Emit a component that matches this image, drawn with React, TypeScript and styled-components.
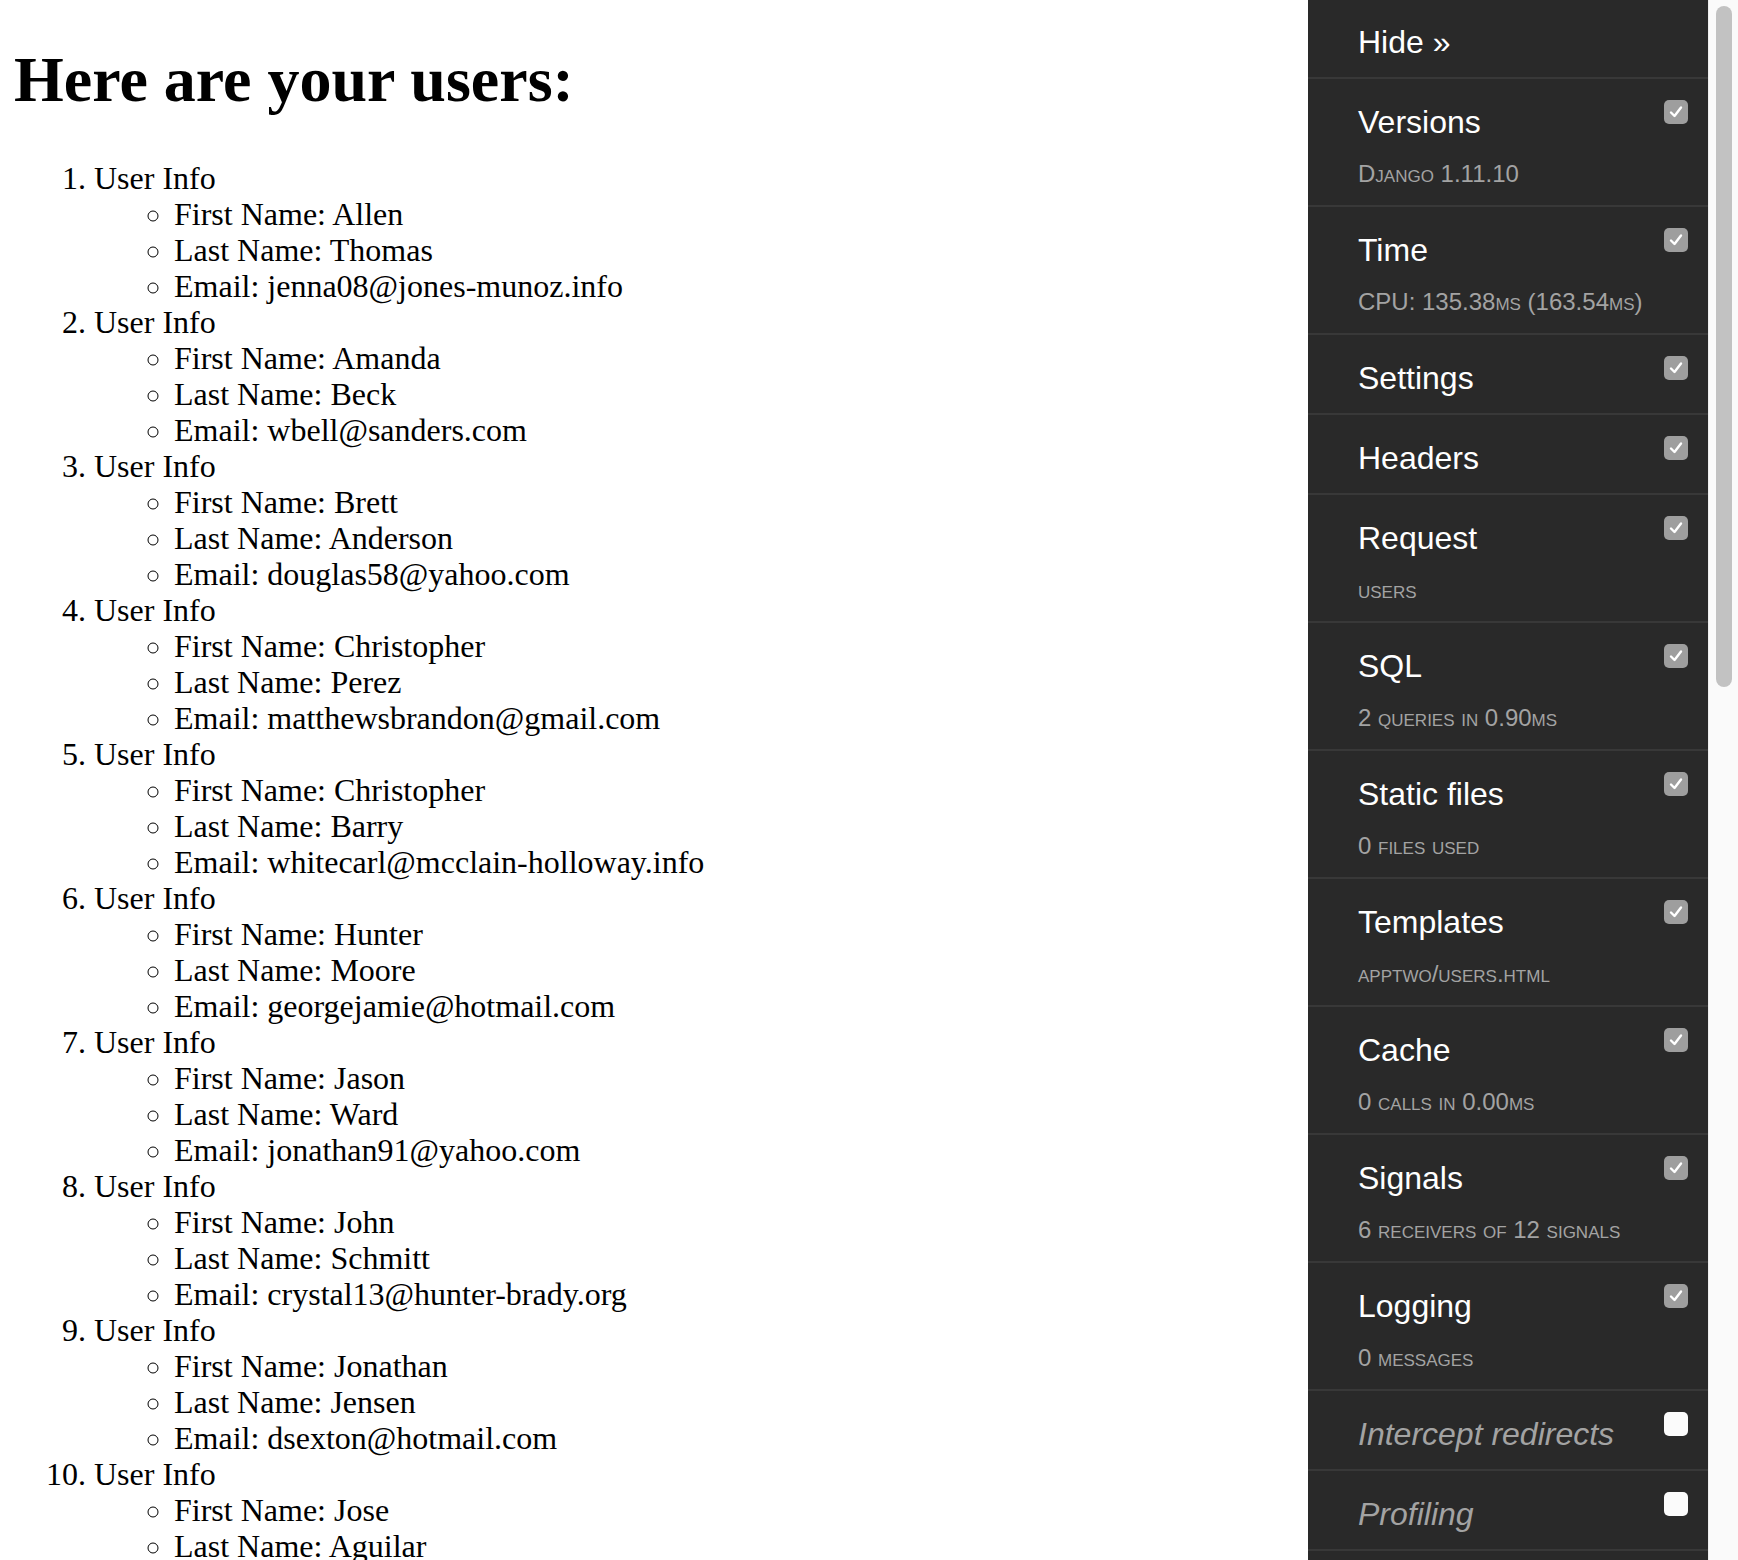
import React from 'react';
import styled, { createGlobalStyle } from 'styled-components';

const GlobalStyle = createGlobalStyle`
  html, body {
    margin: 0;
    padding: 0;
    background: #fff;
    overflow: hidden;
  }
`;

type User = {
  first: string;
  last: string;
  email: string;
};

const users: User[] = [
  { first: 'Allen', last: 'Thomas', email: 'jenna08@jones-munoz.info' },
  { first: 'Amanda', last: 'Beck', email: 'wbell@sanders.com' },
  { first: 'Brett', last: 'Anderson', email: 'douglas58@yahoo.com' },
  { first: 'Christopher', last: 'Perez', email: 'matthewsbrandon@gmail.com' },
  { first: 'Christopher', last: 'Barry', email: 'whitecarl@mcclain-holloway.info' },
  { first: 'Hunter', last: 'Moore', email: 'georgejamie@hotmail.com' },
  { first: 'Jason', last: 'Ward', email: 'jonathan91@yahoo.com' },
  { first: 'John', last: 'Schmitt', email: 'crystal13@hunter-brady.org' },
  { first: 'Jonathan', last: 'Jensen', email: 'dsexton@hotmail.com' },
  { first: 'Jose', last: 'Aguilar', email: 'lisa42@gmail.com' },
];

type Panel = {
  title: string;
  subtitle?: string;
  checked: boolean;
  disabled?: boolean;
};

const panels: Panel[] = [
  { title: 'Versions', subtitle: 'Django 1.11.10', checked: true },
  { title: 'Time', subtitle: 'CPU: 135.38ms (163.54ms)', checked: true },
  { title: 'Settings', checked: true },
  { title: 'Headers', checked: true },
  { title: 'Request', subtitle: 'users', checked: true },
  { title: 'SQL', subtitle: '2 queries in 0.90ms', checked: true },
  { title: 'Static files', subtitle: '0 files used', checked: true },
  { title: 'Templates', subtitle: 'apptwo/users.html', checked: true },
  { title: 'Cache', subtitle: '0 calls in 0.00ms', checked: true },
  { title: 'Signals', subtitle: '6 receivers of 12 signals', checked: true },
  { title: 'Logging', subtitle: '0 messages', checked: true },
  { title: 'Intercept redirects', checked: false, disabled: true },
  { title: 'Profiling', checked: false, disabled: true },
  { title: 'Close', checked: false, disabled: true },
];

const Window = styled.div`
  display: flex;
  width: 1738px;
  height: 1560px;
  overflow: hidden;
`;

const Main = styled.main`
  flex: 1;
  min-width: 0;
  height: 1560px;
  overflow: hidden;
  padding: 0 14px;
  font-family: 'Liberation Serif', 'Times New Roman', serif;
  color: #000;
`;

const Heading = styled.h1`
  font-size: 64px;
  font-weight: bold;
  line-height: 74px;
  margin: 43px 0 43px 0;
`;

const UserList = styled.ol`
  margin: 0;
  padding-left: 80px;
  font-size: 32px;
  line-height: 36px;
`;

const FieldList = styled.ul`
  margin: 0;
  padding-left: 80px;
  list-style-type: circle;
`;

const Toolbar = styled.aside`
  flex: none;
  width: 400px;
  height: 1560px;
  overflow: hidden;
  background: #292929;
  font-family: 'Liberation Sans', Arial, Helvetica, sans-serif;
`;

const PanelList = styled.ul`
  list-style: none;
  margin: 0;
  padding: 0;
`;

const HideRow = styled.li`
  padding: 22px 20px 15px 50px;
  border-bottom: 2px solid #383838;
  font-size: 32px;
  line-height: 40px;
  color: #fff;
`;

const PanelRow = styled.li`
  display: flex;
  align-items: flex-start;
  padding: 23px 20px 15px 50px;
  border-bottom: 2px solid #383838;
`;

const PanelText = styled.div`
  flex: 1;
  min-width: 0;
`;

const PanelTitle = styled.div<{ $disabled?: boolean }>`
  font-size: 32px;
  line-height: 40px;
  white-space: nowrap;
  color: ${(p) => (p.$disabled ? '#a3a3a3' : '#fff')};
  font-style: ${(p) => (p.$disabled ? 'italic' : 'normal')};
`;

const PanelSub = styled.div`
  margin: 17px 0 1px;
  font-size: 24px;
  line-height: 30px;
  color: #a3a3a3;
  font-variant: small-caps;
  white-space: nowrap;
`;

const Checkbox = styled.span<{ $checked: boolean }>`
  flex: none;
  display: flex;
  align-items: center;
  justify-content: center;
  width: 24px;
  height: 24px;
  margin-top: -2px;
  border-radius: 5px;
  background: ${(p) => (p.$checked ? '#9e9e9e' : '#fbfbfb')};
`;

const ScrollTrack = styled.div`
  flex: none;
  width: 30px;
  height: 1560px;
  box-sizing: border-box;
  background: #fafafa;
  border-left: 1px solid #ededed;
  padding: 6px 6px 0 7px;
`;

const ScrollThumb = styled.div`
  width: 16px;
  height: 681px;
  border-radius: 8px;
  background: #c2c2c2;
`;

const Check = () => (
  <svg width="18" height="18" viewBox="0 0 18 18">
    <path
      d="M4 9.5 L7.5 13 L14 4.5"
      fill="none"
      stroke="#fff"
      strokeWidth="2.4"
      strokeLinecap="round"
      strokeLinejoin="round"
    />
  </svg>
);

export default function App() {
  return (
    <>
      <GlobalStyle />
      <Window>
        <Main>
          <Heading>Here are your users:</Heading>
          <UserList>
            {users.map((u, i) => (
              <li key={i}>
                User Info
                <FieldList>
                  <li>First Name: {u.first}</li>
                  <li>Last Name: {u.last}</li>
                  <li>Email: {u.email}</li>
                </FieldList>
              </li>
            ))}
          </UserList>
        </Main>
        <Toolbar>
          <PanelList>
            <HideRow>Hide »</HideRow>
            {panels.map((p) => (
              <PanelRow key={p.title}>
                <PanelText>
                  <PanelTitle $disabled={p.disabled}>{p.title}</PanelTitle>
                  {p.subtitle && <PanelSub>{p.subtitle}</PanelSub>}
                </PanelText>
                <Checkbox $checked={p.checked}>{p.checked && <Check />}</Checkbox>
              </PanelRow>
            ))}
          </PanelList>
        </Toolbar>
        <ScrollTrack>
          <ScrollThumb />
        </ScrollTrack>
      </Window>
    </>
  );
}
